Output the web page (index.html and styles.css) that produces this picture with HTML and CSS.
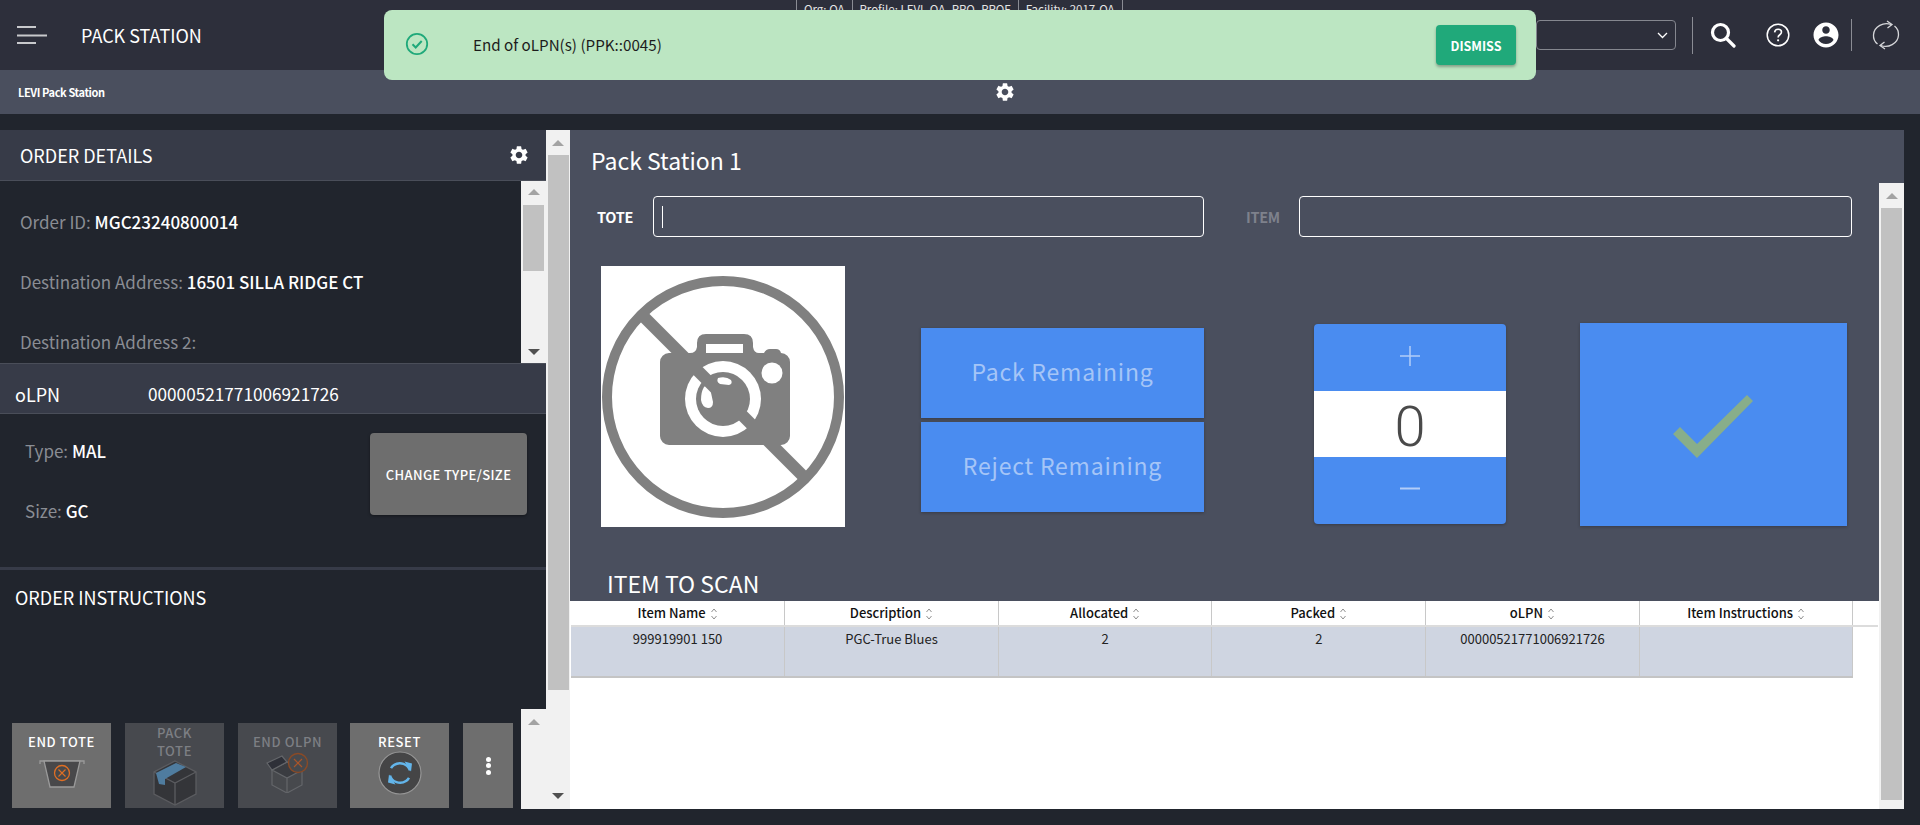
FILE: index.html
```html
<!DOCTYPE html>
<html lang="en">
<head>
<meta charset="utf-8">
<title>Pack Station</title>
<link rel="stylesheet" href="styles.css">
</head>
<body>
<svg class="defs" width="0" height="0" aria-hidden="true">
  <symbol id="gear" viewBox="0 0 24 24"><path d="M19.14 12.94c.04-.3.06-.61.06-.94 0-.32-.02-.64-.07-.94l2.03-1.58a.49.49 0 0 0 .12-.61l-1.92-3.32a.488.488 0 0 0-.59-.22l-2.39.96c-.5-.38-1.03-.7-1.62-.94l-.36-2.54a.484.484 0 0 0-.48-.41h-3.84c-.24 0-.43.17-.47.41l-.36 2.54c-.59.24-1.13.57-1.62.94l-2.39-.96c-.22-.08-.47 0-.59.22L2.74 8.87c-.12.21-.08.47.12.61l2.03 1.58c-.05.3-.09.63-.09.94s.02.64.07.94l-2.03 1.58a.49.49 0 0 0-.12.61l1.92 3.32c.12.22.37.29.59.22l2.39-.96c.5.38 1.03.7 1.62.94l.36 2.54c.05.24.24.41.48.41h3.84c.24 0 .44-.17.47-.41l.36-2.54c.59-.24 1.13-.56 1.62-.94l2.39.96c.22.08.47 0 .59-.22l1.92-3.32c.12-.22.07-.47-.12-.61l-2.01-1.58zM12 15.6c-1.98 0-3.6-1.62-3.6-3.6s1.62-3.6 3.6-3.6 3.6 1.62 3.6 3.6-1.62 3.6-3.6 3.6z" fill="#fff"/></symbol>
  <symbol id="sort" viewBox="0 0 8 14"><path d="M1.500 5 4 2l2.500 3M1.500 9 4 12l2.500-3" fill="none" stroke="#8f8f8f" stroke-width="1"/></symbol>
</svg>

<header class="topbar">
  <svg class="menu-icon" width="30" height="20" viewBox="0 0 30 20"><path d="M0 1h19M0 9.500h30M0 17h19" stroke="#c8c9cc" stroke-width="2"/></svg>
  <span class="app-title">PACK STATION</span>
  <div class="context">
    <span>Org: QA</span><span>Profile: LEVI_QA_PRO_PROF</span><span>Facility: 2017-QA</span>
  </div>
  <div class="top-tools">
    <div class="select-box">
      <svg width="11" height="7" viewBox="0 0 11 7"><path d="M1 1l4.500 4.500L10 1" fill="none" stroke="#fff" stroke-width="1.300"/></svg>
    </div>
    <i class="divider tall"></i>
    <svg class="tool-search" width="26" height="26" viewBox="0 0 26 26"><circle cx="10.500" cy="10.500" r="8" fill="none" stroke="#fff" stroke-width="3.200"/><path d="M16.500 16.500 24 24" stroke="#fff" stroke-width="3.200" stroke-linecap="round"/></svg>
    <svg class="tool-help" width="24" height="24" viewBox="0 0 24 24"><circle cx="12" cy="12" r="10.800" fill="none" stroke="#fff" stroke-width="1.500"/><path d="M8.600 9.300c.2-2 1.600-3.100 3.500-3.100 2 0 3.400 1.200 3.400 2.900 0 2.700-3.400 2.600-3.400 5.300" fill="none" stroke="#fff" stroke-width="1.600"/><circle cx="12.100" cy="17.300" r="1.100" fill="#fff"/></svg>
    <svg class="tool-user" width="30" height="30" viewBox="0 0 24 24"><path fill="#fff" d="M12 2C6.480 2 2 6.480 2 12s4.480 10 10 10 10-4.480 10-10S17.520 2 12 2zm0 3c1.660 0 3 1.340 3 3s-1.340 3-3 3-3-1.340-3-3 1.340-3 3-3zm0 14.200c-2.500 0-4.710-1.280-6-3.220.03-1.990 4-3.080 6-3.080 1.990 0 5.970 1.090 6 3.080-1.290 1.940-3.500 3.220-6 3.220z"/></svg>
    <i class="divider short"></i>
    <svg class="tool-sync" width="28" height="30" viewBox="0 0 28 30"><path d="M19 4.500C12 1.800 2 6 1.500 15c-.2 3.500 1.500 7 4 9M9 25.500c7 2.700 17-1.500 17.500-10.500.2-3.500-1.500-7-4-9" fill="none" stroke="#d6d7da" stroke-width="1.300"/><path d="M15 1l5 3.500L15.500 8M13 29l-5-3.500L12.500 22" fill="none" stroke="#d6d7da" stroke-width="1.300"/></svg>
  </div>
</header>

<div class="subbar">
  <span class="sub-title">LEVI Pack Station</span>
  <svg class="sub-gear" width="22" height="22"><use href="#gear"/></svg>
</div>

<div class="toast">
  <svg class="toast-icon" width="24" height="24" viewBox="0 0 24 24"><circle cx="12" cy="12" r="10.200" fill="none" stroke="#1fa97a" stroke-width="1.800"/><path d="M7.500 12.300l3.200 3.200 6-6.500" fill="none" stroke="#1fa97a" stroke-width="2"/></svg>
  <span class="toast-text">End of oLPN(s) (PPK::0045)</span>
  <button class="toast-btn">DISMISS</button>
</div>

<main class="workspace">
  <aside class="left">
    <div class="panel-head">
      <span>ORDER DETAILS</span>
      <svg width="22" height="22"><use href="#gear"/></svg>
    </div>
    <div class="details">
      <div class="details-body">
        <p class="field"><span>Order ID:</span> <b>MGC23240800014</b></p>
        <p class="field"><span>Destination Address:</span> <b>16501 SILLA RIDGE CT</b></p>
        <p class="field"><span>Destination Address 2:</span></p>
      </div>
      <div class="scrollbar small">
        <i class="arrow up"></i>
        <i class="thumb"></i>
        <i class="arrow down"></i>
      </div>
    </div>
    <div class="olpn-strip"><span class="olpn-label">oLPN</span><span class="olpn-value">00000521771006921726</span></div>
    <div class="type-block">
      <div class="type-fields">
        <p class="field"><span>Type:</span> <b>MAL</b></p>
        <p class="field"><span>Size:</span> <b>GC</b></p>
      </div>
      <button class="change-btn">CHANGE TYPE/SIZE</button>
    </div>
    <div class="instructions">ORDER INSTRUCTIONS</div>
    <div class="footer">
      <div class="actions">
        <button class="act">
          <span class="act-label">END TOTE</span>
          <svg class="act-tote" width="46" height="30" viewBox="0 0 46 30"><path d="M1 5V2h44v3" fill="none" stroke="#9a9a9a" stroke-width="1.300"/><path d="M5 2l6 26h24l6-26z" fill="#48484a" stroke="#9a9a9a" stroke-width="1.300"/><circle cx="23" cy="14" r="7.500" fill="none" stroke="#e06f24" stroke-width="1.300"/><path d="M19.500 10.500l7 7m0-7l-7 7" stroke="#e06f24" stroke-width="1.100"/></svg>
        </button>
        <button class="act off">
          <span class="act-label two">PACK TOTE</span>
          <svg class="act-pack" width="44" height="46" viewBox="0 0 44 46"><path d="M22 1 43 12v22L22 45 1 34V12z" fill="#343539" stroke="#5b5c60" stroke-width="1.300"/><path d="M1 12l21 11 21-11M22 23v22" fill="none" stroke="#5b5c60" stroke-width="1.300"/><path d="M3 13 23 3l10 4-21 12v6l-6-1z" fill="#4f7c9f"/></svg>
        </button>
        <button class="act off">
          <span class="act-label">END OLPN</span>
          <svg class="act-olpn" width="46" height="41" viewBox="0 0 46 41"><path d="M7 18v15l15 8 15-8V18" fill="#47494d" stroke="#64666a" stroke-width="1.200"/><path d="M7 18 22 10l15 8-15 8zM22 26v15" fill="#3a3c41" stroke="#64666a" stroke-width="1.200"/><path d="M2 11 17 4l5 6-15 8z" fill="#2e3038" stroke="#64666a" stroke-width="1.200"/><circle cx="33" cy="11" r="9.500" fill="#47494d" stroke="#8a4a26" stroke-width="1.400"/><path d="M29 7l8 8m0-8-8 8" stroke="#a8542a" stroke-width="1.200"/></svg>
        </button>
        <button class="act">
          <span class="act-label">RESET</span>
          <svg class="act-reset" width="44" height="44" viewBox="0 0 44 44"><circle cx="22" cy="22" r="21" fill="#454546" stroke="#979797" stroke-width="1.200"/><path d="M32 19.500C30 13 22 10 16 14c-1.500 1-2.300 2-3 3.200M12 24.500c2 6.500 10 9.500 16 5.500 1.500-1 2.300-2 3-3.200" fill="none" stroke="#63b5ea" stroke-width="2.500"/><path d="M26.500 10.500l7.500 2-1 8zM17.500 33.500l-7.500-2 1-8z" fill="#63b5ea"/></svg>
        </button>
        <button class="act more"><i></i><i></i><i></i></button>
      </div>
      <div class="footbar"><i class="arrow up"></i></div>
    </div>
  </aside>

  <div class="outerbar">
    <i class="arrow up"></i>
    <i class="thumb"></i>
    <i class="arrow down"></i>
  </div>

  <section class="main">
    <h1 class="station">Pack Station 1</h1>
    <div class="main-body">
      <div class="main-content">
        <div class="dark">
          <div class="scan-row">
            <label class="scan-label">TOTE</label>
            <div class="scan-input tote"><i class="caret"></i></div>
            <label class="scan-label dim">ITEM</label>
            <div class="scan-input item"></div>
          </div>
          <div class="work-row">
            <div class="photo">
              <svg width="244" height="261" viewBox="0 0 244 261">
                <circle cx="122" cy="131" r="116" fill="#fff" stroke="#808080" stroke-width="10"/>
                <path d="M68 87H89q6 0 7-6v-4q0-9 9-9h38q9 0 9 9v4q1 6 6 6h5q2-4 6-4h6q4 0 5 4a9 9 0 0 1 9 9V170a9 9 0 0 1-9 9H68a9 9 0 0 1-9-9V96a9 9 0 0 1 9-9z" fill="#808080"/>
                <rect x="105" y="78" width="37" height="9" fill="#fff"/>
                <circle cx="171" cy="107" r="10.500" fill="#fff"/>
                <circle cx="122" cy="133" r="38" fill="#fff"/>
                <circle cx="122" cy="133" r="27" fill="#808080"/>
                <path d="M103 121q3-3 6 1l3 14q0 6-5 6-6-1-7-8 0-8 3-13zM117 112q8-2 13 2 2 4-2 5l-9-1q-4-2-2-6z" fill="#fff"/>
                <path d="M43 51 202 210" stroke="#808080" stroke-width="12"/>
              </svg>
            </div>
            <div class="remain">
              <button class="blue-btn">Pack Remaining</button>
              <button class="blue-btn">Reject Remaining</button>
            </div>
            <div class="counter">
              <div class="count-step">
                <svg width="20" height="20" viewBox="0 0 20 20"><path d="M10 0v20M0 10h20" stroke="#b3cdf8" stroke-width="1.500"/></svg>
              </div>
              <div class="count-value">0</div>
              <div class="count-step">
                <svg width="20" height="3" viewBox="0 0 20 3"><path d="M0 1.500h20" stroke="#b3cdf8" stroke-width="2"/></svg>
              </div>
            </div>
            <button class="confirm">
              <svg width="80" height="63" viewBox="0 0 80 63"><path d="M0 39 7 32 24 49 74 0 80 6 24 63z" fill="#88ae8a"/></svg>
            </button>
          </div>
          <h2 class="scan-title">ITEM TO SCAN</h2>
        </div>
        <table class="grid">
          <thead>
            <tr>
              <th><span>Item Name</span><svg width="8" height="14"><use href="#sort"/></svg></th>
              <th><span>Description</span><svg width="8" height="14"><use href="#sort"/></svg></th>
              <th><span>Allocated</span><svg width="8" height="14"><use href="#sort"/></svg></th>
              <th><span>Packed</span><svg width="8" height="14"><use href="#sort"/></svg></th>
              <th><span>oLPN</span><svg width="8" height="14"><use href="#sort"/></svg></th>
              <th><span>Item Instructions</span><svg width="8" height="14"><use href="#sort"/></svg></th>
              <th class="filler"></th>
            </tr>
          </thead>
          <tbody>
            <tr>
              <td>999919901 150</td>
              <td>PGC-True Blues</td>
              <td>2</td>
              <td>2</td>
              <td>00000521771006921726</td>
              <td></td>
              <td class="filler"></td>
            </tr>
          </tbody>
        </table>
      </div>
      <div class="scrollbar tall">
        <i class="arrow up"></i>
        <i class="thumb"></i>
      </div>
    </div>
  </section>
</main>
</body>
</html>
```
FILE: styles.css
```css
* { box-sizing: border-box; }
html, body { margin: 0; padding: 0; }
body {
  position: relative;
  width: 1920px;
  height: 825px;
  overflow: hidden;
  background: #21252d;
  color: #fff;
  font-family: "Noto Sans CJK SC", "Source Sans Pro", "Open Sans", sans-serif;
  font-size: 18px;
  line-height: 24px;
}
.defs { position: absolute; }
button { font-family: inherit; border: 0; padding: 0; color: inherit; }
p, h1, h2 { margin: 0; font-weight: 400; }
svg { display: block; }

/* top bar */
.topbar {
  height: 70px;
  background: #2d2f3b;
  display: flex;
  align-items: center;
  padding-left: 17px;
}
.menu-icon { margin-top: 1px; }
.app-title { margin-left: 34px; font-size: 18px; line-height: 24px; }
.context {
  position: absolute;
  left: 796px;
  top: 0;
  height: 30px;
  display: flex;
  font-size: 11.500px;
  line-height: 18px;
  color: #e4e4e4;
  background: #2d2f3b;
  border-left: 1px solid #8a8c94;
  border-right: 1px solid #8a8c94;
}
.context span { padding: 0 7px; white-space: nowrap; }
.context span + span { border-left: 1px solid #8a8c94; }
.top-tools { margin-left: auto; display: flex; align-items: center; height: 70px; padding-right: 20.400px; }
.select-box {
  width: 140px;
  height: 30px;
  border: 1px solid #85878f;
  border-radius: 4px;
  display: flex;
  align-items: center;
  justify-content: flex-end;
  padding-right: 7px;
}
.divider { display: block; width: 1px; background: #8a8c94; }
.divider.tall { height: 37px; margin-left: 16px; }
.divider.short { height: 32px; margin-left: 10px; }
.tool-search { margin-left: 17px; margin-top: -1px; }
.tool-help { margin-left: 30px; }
.tool-user { margin-left: 20.600px; }
.tool-sync { margin-left: 20px; }

/* sub bar */
.subbar {
  height: 44px;
  background: #4a4f5e;
  display: flex;
  align-items: center;
  padding-left: 18px;
  position: relative;
}
.sub-title { font-size: 11px; font-weight: 700; letter-spacing: -.4px; width: 86px; white-space: nowrap; }
.sub-gear { margin-left: 890px; }

/* toast */
.toast {
  position: absolute;
  left: 384px;
  top: 10px;
  width: 1152px;
  height: 70px;
  background: #bce6c2;
  border-radius: 8px;
  display: flex;
  align-items: center;
  padding: 0 20px 0 21px;
  color: #1c1c1c;
}
.toast-icon { flex: none; margin-top: -3px; }
.toast-text { margin-left: 44px; font-size: 15.200px; margin-top: -2px; }
.toast-btn {
  margin-left: auto;
  width: 80px;
  height: 40px;
  background: #20a97a;
  color: #fff;
  border-radius: 4px;
  font-size: 12.500px;
  font-weight: 700;
  box-shadow: 0 2px 3px rgba(0,0,0,.3);
}

/* workspace */
.workspace {
  display: flex;
  height: 679px;
  margin-top: 16px;
}
.left { width: 546px; flex: none; display: flex; flex-direction: column; }
.panel-head {
  height: 51px;
  flex: none;
  background: #373b48;
  border-bottom: 1px solid #4a4e59;
  display: flex;
  align-items: center;
  justify-content: space-between;
  padding: 0 16px 0 20px;
  font-size: 18px;
}
.details { height: 182px; flex: none; display: flex; }
.details-body { flex: 1; overflow: hidden; padding: 29px 0 0 20px; }
.field { height: 60px; font-size: 17px; line-height: 24px; color: #8a8d94; }
.field b { font-weight: 500; color: #fff; }
.scrollbar { background: #f1f1f1; flex: none; position: relative; display: flex; flex-direction: column; align-items: center; }
.scrollbar.small { width: 25px; height: 182px; }
.scrollbar.small .arrow.up { margin-top: 8px; }
.scrollbar.small .thumb { height: 66px; width: 21px; margin-top: 10px; background: #c1c1c1; display: block; }
.scrollbar.small .arrow.down { margin-top: auto; margin-bottom: 8px; }
.arrow { display: block; width: 0; height: 0; border-left: 6px solid transparent; border-right: 6px solid transparent; }
.arrow.up { border-bottom: 6px solid #a3a3a3; }
.arrow.down { border-top: 6px solid #505050; }

.olpn-strip {
  height: 51px;
  flex: none;
  background: #373b48;
  border-top: 1px solid #4a4e59;
  border-bottom: 1px solid #4a4e59;
  display: flex;
  align-items: center;
  padding: 10px 0 0 15px;
  font-size: 17.200px;
}
.olpn-label { width: 133px; font-size: 18px; }
.type-block { height: 156px; flex: none; display: flex; justify-content: space-between; padding: 19px 19px 0 25px; border-bottom: 3px solid #373b48; }
.type-fields { padding-top: 6px; }
.change-btn {
  width: 157px;
  height: 82px;
  background: #6e6e6e;
  border-radius: 4px;
  font-size: 13px;
  font-weight: 500;
  letter-spacing: .4px;
  box-shadow: 0 1px 3px rgba(0,0,0,.4);
}
.instructions { height: 139px; flex: none; padding: 15px 0 0 15px; font-size: 18px; }
.footer { flex: 1; display: flex; }
.actions { width: 521px; display: flex; padding: 14px 0 0 12px; }
.act {
  width: 99px;
  height: 85px;
  background: #6e6e6e;
  margin-right: 14px;
  display: flex;
  flex-direction: column;
  align-items: center;
  font-size: 13px;
  font-weight: 500;
  letter-spacing: .6px;
  color: #fff;
  padding-top: 10px;
}
.act:nth-child(3) { margin-right: 13px; }
.act.off { background: #47494e; color: #7d7f84; }
.act-label { line-height: 18px; display: block; }
.act-label.two { width: 50px; margin-top: -9px; }
.act-tote { margin-top: 8px; }
.act-olpn { margin-top: 1px; }
.act.more { width: 50px; margin: 0; padding: 0; justify-content: center; gap: 1.500px; }
.act.more i { display: block; width: 5px; height: 5px; border-radius: 50%; background: #fff; }
.footbar { width: 25px; background: #f1f1f1; display: flex; justify-content: center; padding-top: 10px; }

.outerbar {
  width: 24px;
  flex: none;
  background: #f1f1f1;
  display: flex;
  flex-direction: column;
  align-items: center;
}
.outerbar .arrow.up { margin-top: 10px; }
.outerbar .thumb { display: block; width: 21px; height: 535px; margin-top: 9px; background: #c1c1c1; }
.outerbar .arrow.down { margin-top: auto; margin-bottom: 10px; }

/* main */
.main { width: 1334px; flex: none; display: flex; flex-direction: column; }
.station { height: 53px; flex: none; background: #4a4f5e; padding: 15px 0 0 21px; font-size: 23px; line-height: 30px; }
.main-body { flex: 1; display: flex; min-height: 0; }
.main-content { flex: 1; background: #fff; min-width: 0; }
.scrollbar.tall { width: 25px; }
.scrollbar.tall .arrow.up { margin-top: 10px; }
.scrollbar.tall .thumb { display: block; width: 21px; height: 592px; margin-top: 9px; background: #c1c1c1; }
.dark { height: 418px; background: #4a4f5e; position: relative; display: flex; flex-direction: column; }
.scan-row { display: flex; align-items: center; padding: 13px 0 0 27px; }
.scan-label { font-size: 14.500px; font-weight: 700; color: #fff; letter-spacing: -.3px; width: 56px; }
.scan-label.dim { color: #7e818c; width: 54px; margin-left: 42px; }
.scan-input { height: 41px; border: 1px solid #fff; border-radius: 4px; padding: 9px 8px; }
.scan-input.tote { width: 551px; }
.scan-input.item { width: 553px; margin-left: -1px; }
.caret { display: block; width: 1px; height: 22px; background: #fff; }
.work-row { display: flex; align-items: flex-start; margin-top: 29px; height: 261px; }
.photo { width: 244px; height: 261px; margin-left: 31px; background: #fff; flex: none; }
.remain { width: 283px; margin: 62px 0 0 76px; display: flex; flex-direction: column; gap: 4px; flex: none; }
.blue-btn {
  height: 90px;
  background: #4a8cf0;
  color: #a5c5f7;
  font-size: 23px;
  letter-spacing: .8px;
  padding-bottom: 4px;
  box-shadow: 0 1px 3px rgba(0,0,0,.25);
}
.counter { width: 192px; height: 200px; margin: 58px 0 0 110px; background: #4a8cf0; border-radius: 4px; flex: none; box-shadow: 0 1px 3px rgba(0,0,0,.25); display: flex; flex-direction: column; }
.count-step { height: 67px; display: flex; align-items: center; justify-content: center; padding-bottom: 4px; }
.count-value {
  height: 66px;
  background: #fff;
  color: #4a4a4a;
  font-family: Roboto, sans-serif;
  font-weight: 300;
  font-size: 56px;
  line-height: 72px;
  text-align: center;
}
.confirm { width: 267px; height: 203px; margin: 57px 0 0 74px; background: #4a8cf0; flex: none; display: flex; align-items: center; justify-content: center; box-shadow: 0 1px 3px rgba(0,0,0,.25); }
.confirm svg { margin-left: -2px; margin-top: 3px; }
.scan-title { margin: auto 0 1px 37px; font-size: 23px; line-height: 34px; }

/* table */
.grid { table-layout: fixed; border-collapse: collapse; width: 1307px; margin-left: 1px; color: #111; font-size: 13px; line-height: 18px; background: #fff; }
.grid th, .grid td { width: 213.300px; text-align: center; padding: 0; border-right: 1px solid #c8c8c8; }
.grid th { height: 25px; font-weight: 500; border-bottom: 2px solid #dcdcdc; }
.grid th span { vertical-align: middle; }
.grid th svg { display: inline-block; vertical-align: middle; margin-left: 4px; }
.grid td { height: 51px; background: #cfd5e1; vertical-align: top; padding-top: 3px; border-bottom: 2px solid #c4c4c4; color: #222; }
.grid .filler { width: 25px; border-right: 0; }
.grid td.filler { background: #fff; border-bottom: 0; }
```
